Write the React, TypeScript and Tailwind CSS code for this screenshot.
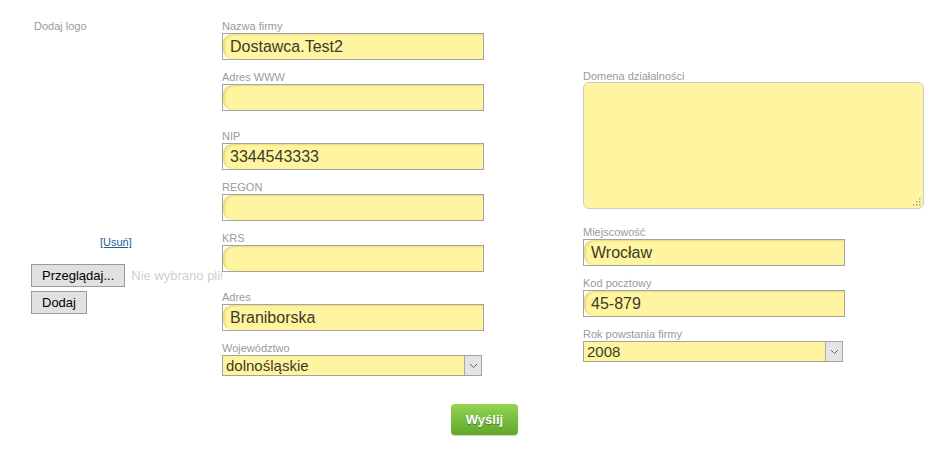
import React from 'react';

const Label = ({ text }: { text: string }) => (
  <div className="h-[14px] text-[11px] leading-[14px] text-[#9a9a9a]">{text}</div>
);

const Field = ({ label, value, className = '' }: { label: string; value?: string; className?: string }) => (
  <div className={className}>
    <Label text={label} />
    <div className="h-[27px] border border-[#a3a3a3] bg-white">
      <input
        readOnly
        value={value ?? ''}
        className="block h-full w-full rounded-l-[9px] bg-[#fff5a0] pl-[7px] text-[16px] text-[#3b3b28] outline-none shadow-[inset_2px_1px_2px_rgba(190,170,60,0.35)]"
      />
    </div>
  </div>
);

const SelectField = ({ label, value, className = '' }: { label: string; value: string; className?: string }) => (
  <div className={className}>
    <Label text={label} />
    <div className="flex h-[21px] border border-[#a3a3a3] bg-[#fff5a0]">
      <div className="flex-1 pl-[3px] text-[15px] leading-[19px] text-[#3b3b28]">{value}</div>
      <div className="flex w-[17px] items-center justify-center border-l border-[#a8a8a8] bg-[#e4e4e4]">
        <svg width="9" height="6" viewBox="0 0 9 6">
          <path d="M1 1l3.5 3.5L8 1" fill="none" stroke="#666" strokeWidth="1" />
        </svg>
      </div>
    </div>
  </div>
);

export default function App() {
  return (
    <div className="h-[451px] w-[941px] bg-white font-['Liberation_Sans',Arial,sans-serif]">
      <div className="flex pt-[19px]">
        {/* logo */}
        <div className="w-[222px] pl-[31px]">
          <div className="pl-[3px] text-[11px] leading-[14px] text-[#9a9a9a]">Dodaj logo</div>
          <div className="mt-[202px] pl-[69px] text-[11px] leading-[14px]">
            <a href="#" className="text-[#1a5e9a] underline">[Usuń]</a>
          </div>
          <div className="mt-[15px] flex items-center gap-[6px] overflow-hidden">
            <button className="h-[23px] shrink-0 border border-[#9a9a9a] bg-[#e1e1e1] px-[10px] text-[13px] text-black">Przeglądaj...</button>
            <span className="whitespace-nowrap text-[13px] text-[#cfcfcf]">Nie wybrano pliku.</span>
          </div>
          <button className="mt-[4px] h-[23px] border border-[#9a9a9a] bg-[#e1e1e1] px-[10px] text-[13px] text-black">Dodaj</button>
        </div>

        {/* dane firmy */}
        <div className="w-[262px]">
          <Field label="Nazwa firmy" value="Dostawca.Test2" />
          <Field label="Adres WWW" className="mt-[10px]" />
          <Field label="NIP" value="3344543333" className="mt-[18px]" />
          <Field label="REGON" className="mt-[10px]" />
          <Field label="KRS" className="mt-[10px]" />
          <Field label="Adres" value="Braniborska" className="mt-[18px]" />
          <SelectField label="Województwo" value="dolnośląskie" className="mt-[10px] w-[260px]" />
        </div>

        {/* adres */}
        <div className="ml-[99px] w-[342px] pt-[50px]">
          <Label text="Domena działalności" />
          <div className="relative mt-[-1px] w-[341px]">
            <textarea
              readOnly
              className="block h-[127px] w-[341px] resize-none rounded-[6px] border border-[#cbcbcb] bg-[#fff5a0] outline-none"
            />
            <svg className="absolute bottom-[3px] right-[3px]" width="8" height="8" viewBox="0 0 8 8">
              <g fill="#a8a8a8">
                <rect x="6" y="0" width="1.5" height="1.5" />
                <rect x="3" y="3" width="1.5" height="1.5" />
                <rect x="6" y="3" width="1.5" height="1.5" />
                <rect x="0" y="6" width="1.5" height="1.5" />
                <rect x="3" y="6" width="1.5" height="1.5" />
                <rect x="6" y="6" width="1.5" height="1.5" />
              </g>
            </svg>
          </div>
          <div className="mt-[16px] w-[262px]">
            <Field label="Miejscowość" value="Wrocław" />
            <Field label="Kod pocztowy" value="45-879" className="mt-[10px]" />
            <SelectField label="Rok powstania firmy" value="2008" className="mt-[10px] w-[260px]" />
          </div>
        </div>
      </div>

      <div className="mt-[28px] pl-[451px]">
        <button className="h-[31px] w-[67px] rounded-[4px] bg-gradient-to-b from-[#95d452] to-[#5ea82c] text-[13px] font-bold text-white shadow-[0_1px_1px_rgba(0,0,0,0.2)] [text-shadow:0_1px_1px_rgba(0,0,0,0.35)]">
          Wyślij
        </button>
      </div>
    </div>
  );
}
